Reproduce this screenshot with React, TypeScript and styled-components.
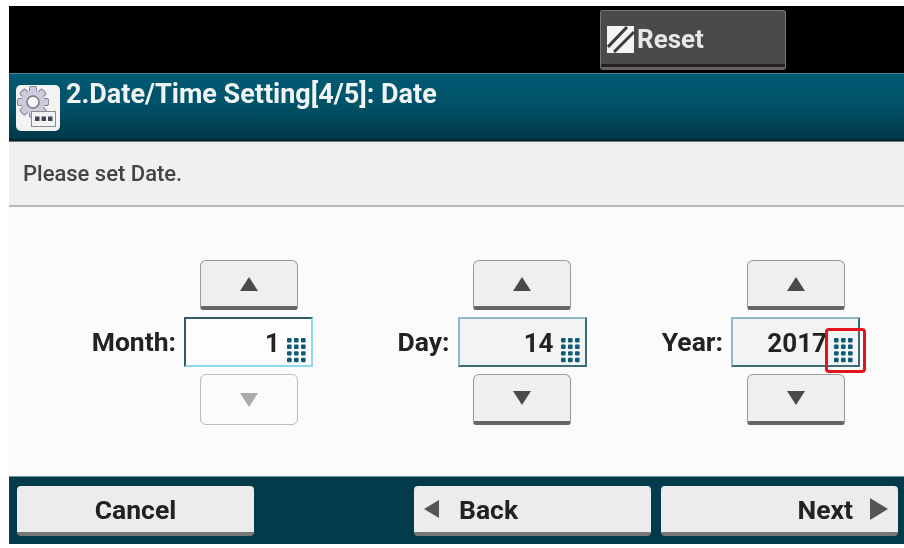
import React from "react";
import styled, { createGlobalStyle } from "styled-components";

const Global = createGlobalStyle`
  html, body {
    margin: 0;
    background: #fff;
  }
  * {
    box-sizing: border-box;
  }
`;

const Page = styled.div`
  width: 904px;
  height: 548px;
  overflow: hidden;
  padding: 6px 0 0 9px;
  font-family: Roboto, "Liberation Sans", sans-serif;
  filter: blur(0.6px);
`;

const TopBar = styled.div`
  height: 67px;
  background: #000;
  padding: 4px 0 0 591px;
`;

const ResetButton = styled.div`
  width: 186px;
  height: 60px;
  display: flex;
  align-items: center;
  gap: 3px;
  padding: 0 0 0 6px;
  background: #4a4a4a;
  border: 1px solid #777;
  border-bottom: 3px solid #6a6262;
  box-shadow: inset 0 -3px 0 #222;
  border-radius: 3px;
  color: #e8e8e8;
  font-size: 26px;
  font-weight: 700;
`;

const Header = styled.div`
  height: 68px;
  display: flex;
  align-items: flex-start;
  gap: 6px;
  padding: 6px 0 0 7px;
  background: linear-gradient(#005a73 0%, #005268 45%, #003a4a 96%, #001a22 100%);
  border-top: 1px solid #3f8496;
`;

const Title = styled.div`
  color: #f0f4f5;
  font-size: 27px;
  font-weight: 700;
  line-height: 28px;
  white-space: nowrap;
`;

const Tile = styled.div`
  width: 44px;
  height: 46px;
  margin-top: 5px;
  background: #f4f3f4;
  border-radius: 5px;
`;

const Hint = styled.div`
  height: 66px;
  display: flex;
  align-items: center;
  padding: 0 0 0 14px;
  background: #f0f0f0;
  border-top: 1px solid #777;
  border-bottom: 2px solid #b8b8bc;
  color: #444;
  font-size: 22px;
  font-weight: 500;
`;

const Content = styled.div`
  height: 269px;
  display: grid;
  grid-template-columns: repeat(3, 273.5px);
  justify-content: end;
  padding: 53px 44px 0 0;
  background: #fbfbfb;
`;

const Spinner = styled.div`
  justify-self: end;
  display: grid;
  grid-template-columns: auto 129px;
  grid-template-rows: 50px 50px 51px;
  row-gap: 7px;
  column-gap: 8px;
  align-items: center;
`;

const StepButton = styled.div<{ $disabled?: boolean }>`
  grid-column: 2;
  justify-self: center;
  width: 98px;
  height: 100%;
  display: flex;
  align-items: center;
  justify-content: center;
  background: ${({ $disabled }) => ($disabled ? "#fbfbfb" : "#efefef")};
  border: 1.5px solid ${({ $disabled }) => ($disabled ? "#bbb" : "#999")};
  border-bottom: ${({ $disabled }) => ($disabled ? "1.5px solid #bbb" : "4px solid #666")};
  border-radius: 6px;
  border-bottom-left-radius: ${({ $disabled }) => ($disabled ? "6px" : "3px")};
  border-bottom-right-radius: ${({ $disabled }) => ($disabled ? "6px" : "3px")};
  color: ${({ $disabled }) => ($disabled ? "#aaa" : "#4a4a4a")};
`;

const Label = styled.div`
  justify-self: end;
  color: #222;
  font-size: 26.5px;
  font-weight: 700;
  padding-bottom: 1px;
`;

const Field = styled.div<{ $focused?: boolean }>`
  position: relative;
  height: 100%;
  display: flex;
  align-items: flex-end;
  justify-content: flex-end;
  gap: 6px;
  padding: 0 5px 0 0;
  background: ${({ $focused }) => ($focused ? "#fdfdfd" : "#f2f3f3")};
  border: 2px solid ${({ $focused }) => ($focused ? "#8ed6f0" : "#8fb8c8")};
  border-top-color: ${({ $focused }) => ($focused ? "#2f5a6a" : "#8fb8c8")};
  border-left-color: ${({ $focused }) => ($focused ? "#2f5a6a" : "#8fb8c8")};
  border-right-color: ${({ $focused }) => ($focused ? "#8ed6f0" : "#3b6a7a")};
  border-bottom-color: ${({ $focused }) => ($focused ? "#8ed6f0" : "#3b6a7a")};
`;

const Value = styled.span`
  color: #222;
  font-size: 26px;
  font-weight: 700;
  line-height: 44px;
`;

const Highlight = styled.div`
  position: absolute;
  right: -8px;
  top: 9px;
  width: 41px;
  height: 45px;
  border: 3.5px solid #e3141e;
  border-radius: 4px;
`;

const Footer = styled.div`
  height: 68px;
  display: flex;
  gap: 10px;
  padding: 9px 6px 0 8px;
  background: #033b4b;
  border-top: 1px solid #6d8f99;
`;

const FooterButton = styled.div<{ $align: "left" | "center" | "right"; $push?: boolean }>`
  width: 237px;
  height: 50px;
  display: flex;
  align-items: center;
  justify-content: ${({ $align }) =>
    $align === "center" ? "center" : $align === "left" ? "flex-start" : "flex-end"};
  gap: ${({ $align }) => ($align === "left" ? "20px" : "17px")};
  padding: ${({ $align }) =>
    $align === "left" ? "0 0 0 10px" : $align === "right" ? "0 10px 0 0" : "0"};
  margin-left: ${({ $push }) => ($push ? "150px" : "0")};
  background: #ececec;
  border-bottom: 4px solid #777;
  border-radius: 4px;
  color: #222;
  font-size: 26.5px;
  font-weight: 700;
`;

const FooterArrow = styled.span`
  color: #555;
  display: flex;
`;

const Triangle = ({ dir, w, h }: { dir: "up" | "down" | "left" | "right"; w: number; h: number }) => {
  const points = {
    up: `0,${h} ${w},${h} ${w / 2},0`,
    down: `0,0 ${w},0 ${w / 2},${h}`,
    left: `${w},0 ${w},${h} 0,${h / 2}`,
    right: `0,0 0,${h} ${w},${h / 2}`,
  }[dir];
  return (
    <svg width={w} height={h} viewBox={`0 0 ${w} ${h}`}>
      <polygon points={points} fill="currentColor" />
    </svg>
  );
};

// 3 x 4 dots, the numeric keypad mark in each field
const KeypadIcon = () => (
  <svg width="20" height="28" viewBox="0 0 20 28">
    {[0, 1, 2, 3].flatMap((row) =>
      [0, 1, 2].map((col) => (
        <rect
          key={`${row}-${col}`}
          x={col * 7 + 1}
          y={row * 6.6 + 1}
          width="4.6"
          height="4.4"
          rx="1"
          fill="#0e5a78"
        />
      )),
    )}
  </svg>
);

const ResetIcon = () => (
  <svg width="27" height="27" viewBox="0 0 27 27">
    <rect width="27" height="27" fill="#f4f4f4" />
    <path d="M1 21 L20 1 M7 26 L27 6" stroke="#3c3c3c" strokeWidth="3" fill="none" />
  </svg>
);

const GearIcon = () => (
  <svg width="44" height="46" viewBox="0 0 44 46">
    <g fill="#cfcbdb" stroke="#85809b" strokeWidth="1">
      {[0, 45, 90, 135].map((a) => (
        <rect key={a} x="13.5" y="1.5" width="7" height="31" rx="1.5" transform={`rotate(${a} 17 17)`} />
      ))}
    </g>
    <circle cx="17" cy="17" r="11.5" fill="#cfcbdb" />
    <circle cx="17" cy="17" r="6" fill="#f6f5f7" stroke="#7d7893" strokeWidth="1.6" />
    <rect x="15.5" y="26.5" width="24" height="15" fill="#f4f3f4" stroke="#8a8a8a" />
    <g fill="#3f4650">
      <rect x="19" y="31.5" width="4.5" height="4.5" />
      <rect x="25.5" y="31.5" width="4.5" height="4.5" />
      <rect x="32" y="31.5" width="4.5" height="4.5" />
    </g>
  </svg>
);

type SpinnerRowProps = {
  label: string;
  value: string;
  focused?: boolean;
  downDisabled?: boolean;
  marked?: boolean;
};

const SpinnerRow = ({ label, value, focused, downDisabled, marked }: SpinnerRowProps) => (
  <Spinner>
    <StepButton>
      <Triangle dir="up" w={18} h={14} />
    </StepButton>
    <Label>{label}</Label>
    <Field $focused={focused}>
      <Value>{value}</Value>
      <KeypadIcon />
      {marked && <Highlight />}
    </Field>
    <StepButton $disabled={downDisabled}>
      <Triangle dir="down" w={18} h={14} />
    </StepButton>
  </Spinner>
);

export default function App() {
  return (
    <Page>
      <Global />
      <TopBar>
        <ResetButton>
          <ResetIcon />
          Reset
        </ResetButton>
      </TopBar>
      <Header>
        <Tile>
          <GearIcon />
        </Tile>
        <Title>2.Date/Time Setting[4/5]: Date</Title>
      </Header>
      <Hint>Please set Date.</Hint>
      <Content>
        <SpinnerRow label="Month:" value="1" focused downDisabled />
        <SpinnerRow label="Day:" value="14" />
        <SpinnerRow label="Year:" value="2017" marked />
      </Content>
      <Footer>
        <FooterButton $align="center">Cancel</FooterButton>
        <FooterButton $align="left" $push>
          <FooterArrow>
            <Triangle dir="left" w={15} h={18} />
          </FooterArrow>
          Back
        </FooterButton>
        <FooterButton $align="right">
          Next
          <FooterArrow>
            <Triangle dir="right" w={18} h={22} />
          </FooterArrow>
        </FooterButton>
      </Footer>
    </Page>
  );
}
